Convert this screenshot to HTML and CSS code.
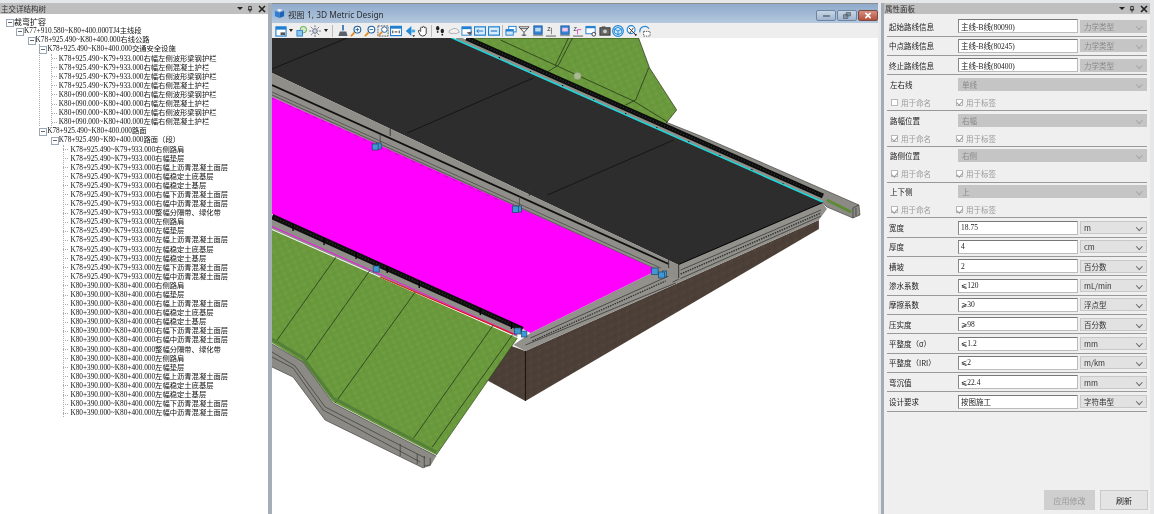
FILE: index.html
```html
<!DOCTYPE html>
<html lang="zh">
<head>
<meta charset="utf-8">
<title>3D Metric Design</title>
<link rel="stylesheet" href="styles.css">
</head>
<body>
<div class="app">
  <aside class="panel tree-panel">
    <header class="panel-title"><span>主交详结构树</span>
      <span class="panel-tools"><i class="tri"></i><svg viewBox="0 0 7 8" class="pin"><path d="M2 1h3v4H2zM1 5h5M3.5 5v3" fill="none" stroke="#222"/></svg><svg viewBox="0 0 8 8" class="cross"><path d="M1 1l6 6M7 1L1 7" stroke="#222" stroke-width="1.6"/></svg></span>
    </header>
    <div class="tree">
      <div class="node top">裁弯扩容</div>
      <ul>
        <li><div class="node">K77+910.580~K80+400.000TJ4主线段</div>
          <ul>
            <li><div class="node">K78+925.490~K80+400.000右线公路</div>
              <ul>
                <li class="bar"><div class="node">K78+925.490~K80+400.000交通安全设施</div>
                  <ul class="lined">
                    <li class="leaf">K78+925.490~K79+933.000右幅左侧波形梁钢护栏</li>
                    <li class="leaf">K78+925.490~K79+933.000右幅左侧混凝土护栏</li>
                    <li class="leaf">K78+925.490~K79+933.000左幅右侧波形梁钢护栏</li>
                    <li class="leaf">K78+925.490~K79+933.000左幅右侧混凝土护栏</li>
                    <li class="leaf">K80+090.000~K80+400.000右幅左侧波形梁钢护栏</li>
                    <li class="leaf">K80+090.000~K80+400.000右幅左侧混凝土护栏</li>
                    <li class="leaf">K80+090.000~K80+400.000左幅右侧波形梁钢护栏</li>
                    <li class="leaf">K80+090.000~K80+400.000左幅右侧混凝土护栏</li>
                  </ul>
                </li>
                <li><div class="node">K78+925.490~K80+400.000路面</div>
                  <ul>
                    <li><div class="node">K78+925.490~K80+400.000路面（段）</div>
                      <ul class="lined">
                        <li class="leaf">K78+925.490~K79+933.000右侧路肩</li>
                        <li class="leaf">K78+925.490~K79+933.000右幅垫层</li>
                        <li class="leaf">K78+925.490~K79+933.000右幅上沥青混凝土面层</li>
                        <li class="leaf">K78+925.490~K79+933.000右幅稳定土底基层</li>
                        <li class="leaf">K78+925.490~K79+933.000右幅稳定土基层</li>
                        <li class="leaf">K78+925.490~K79+933.000右幅下沥青混凝土面层</li>
                        <li class="leaf">K78+925.490~K79+933.000右幅中沥青混凝土面层</li>
                        <li class="leaf">K78+925.490~K79+933.000整幅分隔带、绿化带</li>
                        <li class="leaf">K78+925.490~K79+933.000左侧路肩</li>
                        <li class="leaf">K78+925.490~K79+933.000左幅垫层</li>
                        <li class="leaf">K78+925.490~K79+933.000左幅上沥青混凝土面层</li>
                        <li class="leaf">K78+925.490~K79+933.000左幅稳定土底基层</li>
                        <li class="leaf">K78+925.490~K79+933.000左幅稳定土基层</li>
                        <li class="leaf">K78+925.490~K79+933.000左幅下沥青混凝土面层</li>
                        <li class="leaf">K78+925.490~K79+933.000左幅中沥青混凝土面层</li>
                        <li class="leaf">K80+390.000~K80+400.000右侧路肩</li>
                        <li class="leaf">K80+390.000~K80+400.000右幅垫层</li>
                        <li class="leaf">K80+390.000~K80+400.000右幅上沥青混凝土面层</li>
                        <li class="leaf">K80+390.000~K80+400.000右幅稳定土底基层</li>
                        <li class="leaf">K80+390.000~K80+400.000右幅稳定土基层</li>
                        <li class="leaf">K80+390.000~K80+400.000右幅下沥青混凝土面层</li>
                        <li class="leaf">K80+390.000~K80+400.000右幅中沥青混凝土面层</li>
                        <li class="leaf">K80+390.000~K80+400.000整幅分隔带、绿化带</li>
                        <li class="leaf">K80+390.000~K80+400.000左侧路肩</li>
                        <li class="leaf">K80+390.000~K80+400.000左幅垫层</li>
                        <li class="leaf">K80+390.000~K80+400.000左幅上沥青混凝土面层</li>
                        <li class="leaf">K80+390.000~K80+400.000左幅稳定土底基层</li>
                        <li class="leaf">K80+390.000~K80+400.000左幅稳定土基层</li>
                        <li class="leaf">K80+390.000~K80+400.000左幅下沥青混凝土面层</li>
                        <li class="leaf">K80+390.000~K80+400.000左幅中沥青混凝土面层</li>
                      </ul>
                    </li>
                  </ul>
                </li>
              </ul>
            </li>
          </ul>
        </li>
      </ul>
    </div>
  </aside>

  <div class="split-left"></div>

  <main class="view">
    <header class="view-title">
      <svg class="view-logo" viewBox="0 0 12 12"><path d="M1 3l5 2v6L1 9z" fill="#2f7fd6"/><path d="M6 5l5-2v6l-5 2z" fill="#1f62b4"/><path d="M3 2l3-1 3 1-3 2z" fill="#e8f1fb"/></svg>
      <span class="view-name">视图 1, 3D Metric Design</span>
      <span class="win-btns">
        <span class="win-btn"><i class="w-min"></i></span>
        <span class="win-btn"><svg viewBox="0 0 9 8"><path d="M3.5 .5h5v4h-5zM.5 3h5v4.500h-5z" fill="#8592a2" stroke="#4a5460" stroke-width=".7"/></svg></span>
        <span class="win-btn close"><svg viewBox="0 0 9 8"><path d="M1.500 1l6 6M7.500 1l-6 6" stroke="#fff" stroke-width="1.800"/></svg></span>
      </span>
    </header>
    <nav class="view-tools">
      <svg class="ic" viewBox="0 0 13 13"><rect x="1" y="2" width="11" height="10" fill="#fff" stroke="#1f7fd0" stroke-width="1.200"/><rect x="1" y="2" width="11" height="3" fill="#1f7fd0"/><rect x="6" y="8" width="5" height="3" fill="#555"/></svg>
      <i class="drop"></i>
      <svg class="ic" viewBox="0 0 13 13"><circle cx="8" cy="5" r="3.500" fill="#cfe8c4" stroke="#59a848"/><rect x="1" y="6" width="6" height="6" fill="#8ec5ee" stroke="#2f7fd0"/></svg>
      <svg class="ic" viewBox="0 0 13 13"><circle cx="6.500" cy="6.500" r="2.500" fill="#c5d4e6" stroke="#667"/><path d="M6.500 0v2.500M6.500 10.500V13M0 6.500h2.500M10.500 6.500H13M2 2l2 2M9 9l2 2M11 2L9 4M4 9l-2 2" stroke="#778" stroke-width="1"/></svg>
      <i class="drop"></i><i class="sep wide-sep"></i>
      <svg class="ic" viewBox="0 0 13 13"><path d="M5.500 0h2v6h-2z" fill="#3f78b8"/><path d="M3 7h7l1.500 5h-10z" fill="#59616c"/></svg>
      <svg class="ic" viewBox="0 0 13 13"><circle cx="8" cy="5" r="3.700" fill="#fff" stroke="#1d5f9c" stroke-width="1.200"/><path d="M6 5h4M8 3v4" stroke="#1d5f9c"/><path d="M5 8l-4 4" stroke="#e58a1f" stroke-width="2"/></svg>
      <svg class="ic" viewBox="0 0 13 13"><circle cx="8" cy="5" r="3.700" fill="#fff" stroke="#1d5f9c" stroke-width="1.200"/><path d="M6 5h4" stroke="#1d5f9c"/><path d="M5 8l-4 4" stroke="#e58a1f" stroke-width="2"/></svg>
      <svg class="ic" viewBox="0 0 13 13"><rect x="1" y="1" width="11" height="11" fill="none" stroke="#555" stroke-dasharray="2 1"/><circle cx="8" cy="5" r="3" fill="#fff" stroke="#1d5f9c"/><path d="M5.500 7.500L2 11" stroke="#e58a1f" stroke-width="1.800"/></svg>
      <svg class="ic" viewBox="0 0 13 13"><rect x=".5" y="1.500" width="12" height="10" fill="#fff" stroke="#1f7fd0" stroke-width="1.300"/><rect x="1" y="2" width="11" height="2" fill="#1f7fd0"/><path d="M3 6v3M10 6v3M5 7.500h3" stroke="#222"/></svg>
      <svg class="ic" viewBox="0 0 13 13"><path d="M8 1L2 6.500 8 12z" fill="#1f8ad6"/><path d="M8 5h4v3H8z" fill="#4aa7e6"/><path d="M9 11h3l-1.500 2z" fill="#222"/></svg>
      <svg class="ic" viewBox="0 0 13 13"><path d="M4 6V3q1-2 2 0V2q1-1 2 0v1q1-1 2 0v6q-1 3-4 3T2 8L1.500 6q1-1 2.500 1z" fill="#fff" stroke="#333"/></svg>
      <i class="sep"></i>
      <svg class="ic" viewBox="0 0 13 13"><ellipse cx="4" cy="3.500" rx="1.800" ry="2.500" fill="#222"/><ellipse cx="9" cy="6.500" rx="1.800" ry="2.500" fill="#222"/><circle cx="4" cy="7.500" r="1" fill="#222"/><circle cx="9" cy="10.500" r="1" fill="#222"/></svg>
      <svg class="ic" viewBox="0 0 13 13"><path d="M1 8q0-3 3-3 2-2 5-1 3 1 3 4-3 2-6 1-3 1-5-1z" fill="#f2f2f2" stroke="#aaa"/></svg>
      <svg class="ic" viewBox="0 0 13 13"><rect x="1" y="2" width="10" height="9" fill="#fff" stroke="#1f7fd0"/><rect x="1" y="2" width="10" height="2.500" fill="#1f7fd0"/><path d="M6 8l6-1-2 4z" fill="#555"/></svg>
      <svg class="ic" viewBox="0 0 13 13"><rect x=".5" y="2" width="12" height="9" fill="#d8ecfb" stroke="#1f7fd0" stroke-width="1.300"/><path d="M3 6.500h7M3 6.500l2-2M3 6.500l2 2" stroke="#1f6fc0" fill="none"/></svg>
      <svg class="ic" viewBox="0 0 13 13"><rect x=".5" y="2" width="12" height="9" fill="#d8ecfb" stroke="#1f7fd0" stroke-width="1.300"/><path d="M3 6.500h7" stroke="#1f6fc0" stroke-width="1.200"/></svg>
      <i class="sep"></i>
      <svg class="ic" viewBox="0 0 13 13"><rect x="4" y="1.500" width="8" height="6" fill="#fff" stroke="#1f7fd0"/><rect x="1" y="5" width="8" height="6" fill="#cfe6f8" stroke="#1f7fd0"/><rect x="1" y="5" width="8" height="2" fill="#1f7fd0"/></svg>
      <svg class="ic" viewBox="0 0 13 13"><path d="M1 2h11L6.500 8z" fill="#fff" stroke="#444"/><path d="M6.500 8v4M4 11h5M3 4h7" stroke="#444"/></svg>
      <svg class="ic" viewBox="0 0 13 13"><rect x="2" y="1" width="9" height="9" fill="#3a83d2" stroke="#1d5fa8"/><rect x="3.500" y="3" width="6" height="4" fill="#bcd9f3"/><path d="M1 11.500h11" stroke="#888"/></svg>
      <svg class="ic" viewBox="0 0 13 13"><path d="M1 12h11" stroke="#888" stroke-width="1.500"/><path d="M7 10V3" stroke="#777"/><text x="2.500" y="7" class="ic-txt">Z</text></svg>
      <svg class="ic" viewBox="0 0 13 13"><rect x="2" y="1" width="9" height="9" fill="#3a83d2" stroke="#1d5fa8"/><rect x="3.500" y="3" width="6" height="4" fill="#f3c7ea"/><path d="M1 11.500h11" stroke="#888"/></svg>
      <svg class="ic" viewBox="0 0 13 13"><path d="M1 12h11" stroke="#888" stroke-width="1.500"/><path d="M6 10V5H10" stroke="#d84fc8" fill="none"/><text x="1.500" y="6" class="ic-txt">Z</text></svg>
      <svg class="ic" viewBox="0 0 13 13"><rect x="1" y="1.500" width="10" height="8" fill="#fff" stroke="#1f7fd0"/><rect x="1" y="1.500" width="10" height="2" fill="#1f7fd0"/><circle cx="9.500" cy="10" r="2" fill="#fff" stroke="#333"/></svg>
      <svg class="ic" viewBox="0 0 13 13"><rect x="1" y="3" width="11" height="8" fill="#666" stroke="#333"/><circle cx="6.500" cy="7" r="2" fill="#ccc"/><rect x="3" y="1.500" width="4" height="2" fill="#555"/></svg>
      <svg class="ic" viewBox="0 0 13 13"><circle cx="6.500" cy="6.500" r="5.800" fill="#cfe7f9" stroke="#1f86d6" stroke-width="1.200"/><path d="M2.500 4.500l4-2 4 2-4 2zM2.500 4.500v4l4 2v-4M10.500 4.500v4l-4 2" fill="none" stroke="#1f86d6"/></svg>
      <svg class="ic" viewBox="0 0 13 13"><circle cx="5.500" cy="5" r="4.300" fill="#fff" stroke="#1f86d6" stroke-width="1.200"/><path d="M3 3l8 8M8 3l-4 6" stroke="#333"/><path d="M9 10l3 0-1.500 2z" fill="#111"/></svg>
      <svg class="ic" viewBox="0 0 13 13"><path d="M1 8a5.500 5.500 0 0 1 10-4" fill="none" stroke="#1f86d6" stroke-width="1.200"/><path d="M5 7h7v5H5z" fill="#fff" stroke="#555" stroke-dasharray="1.500 1"/></svg>
    </nav>
    <div class="canvas">
      <svg class="scene" viewBox="272 38 605 476" preserveAspectRatio="none" aria-hidden="true">
        <defs>
          <pattern id="grass" width="7" height="6" patternUnits="userSpaceOnUse" patternTransform="rotate(-25)">
            <rect width="7" height="6" fill="#6a993d"/><circle cx="2" cy="2" r="1.600" fill="#6e9e40"/><circle cx="5.500" cy="4.500" r="1.400" fill="#66953a"/>
          </pattern>
          <pattern id="brick" width="8" height="8" patternUnits="userSpaceOnUse" patternTransform="skewY(-25)">
            <rect width="8" height="8" fill="#4c3f37"/><rect x="1" y="1" width="3" height="3" fill="#50433a"/><rect x="5" y="5" width="2.500" height="2.500" fill="#483c34"/>
          </pattern>
        </defs>
        <!-- far ditch -->
        <polygon points="660,120 700,136 753,159 858,205 859,215 852,218 826,207 815,195 660,128" fill="#8b8a84" stroke="#333" stroke-width=".6"/>
        <path d="M826,200L850,212" stroke="#5f8a35" stroke-width="3"/>
        <path d="M852,218V208L858,205M855,216V208" stroke="#333" stroke-width=".7" fill="none"/>
        <!-- far slope -->
        <polygon points="470,38 638,38 649,68 676,110 664,125" fill="url(#grass)" stroke="#26331a" stroke-width=".7"/>
        <path d="M500,40L633,101L667,122M572,38L558,65L542,75M568,38L555,65M648,68L635,100L625,105" fill="none" stroke="#1c2a14" stroke-width=".7"/>
        <circle cx="577" cy="76" r="3.600" fill="#a9ba92" stroke="#8a9c78" stroke-width=".6"/>
        <!-- far fence -->
        <path d="M456,38L822,201" stroke="#8f8f8a" stroke-width="5"/>
        <path d="M466,38L822,196" stroke="#0d0d0d" stroke-width="5"/>
        <path d="M466,38L822,196" stroke="#333" stroke-width="1.500" stroke-dasharray="1 2"/>
        <path d="M499,57V65M530,71V79M562,85V93M593,99V107M625,113V121M656,127V135M688,141V149M719,155V163M751,169V177M782,183V191" stroke="#000" stroke-width="1.300"/>
        <path d="M460,43L822,204" stroke="#e01010" stroke-width="1.200" stroke-dasharray="8 26"/>
        <path d="M450,37.500L822,202.500" stroke="#18d9dc" stroke-width="2"/>
        <!-- asphalt -->
        <polygon points="272,38 450,38 822,203 678,265 272,73" fill="#2d2d2d"/>
        <path d="M347,38L272,69M407,133L533,78M547,195L673,140" stroke="#0b0b0b" stroke-width=".7"/>
        <path d="M678,265L822,203" stroke="#000" stroke-width="1.800"/>
        <!-- wall -->
        <polygon points="480,335 525,351 818,220 818,229 525,401 488,381" fill="url(#brick)"/>
        <path d="M525,351V401" stroke="#17110e" stroke-width="1"/>
        <!-- outer slab -->
        <polygon points="678,265 822,203 826,209 818,220 525,351 513,345 530,333 657,270" fill="#92918b"/>
        <path d="M680,270L820,210M672,282L820,216M530,338L668,276M525,345L675,283" stroke="#2c2c2c" stroke-width=".7"/>
        <path d="M680,274L820,213" stroke="#333" stroke-width="1.500" stroke-dasharray="1.500 1"/>
        <path d="M532,341L665,281" stroke="#333" stroke-width="1.300" stroke-dasharray="1.500 1"/>
        <!-- median -->
        <polygon points="272,73 678,265 680,280 657,272 272,97" fill="#8f8e88"/>
        <path d="M272,85L668,264" stroke="#111" stroke-width="1.800"/>
        <path d="M272,92L660,268M272,95L657,270" stroke="#333" stroke-width=".6"/>
        <path d="M390,128V136M529,188V196M668,252V268M678,265V278" stroke="#333" stroke-width=".9"/>
        <path d="M380,135V147M519,197V208" stroke="#555" stroke-width="1"/>
        <!-- carriageway -->
        <polygon points="272,97 657,270 530,333 515,325 272,214" fill="#ff00ff"/>
        <path d="M272,98L500,201" stroke="#7a1a7a" stroke-width=".5" stroke-dasharray="4 5"/>
        <!-- near fence -->
        <polygon points="272,218 517,330 517,337 272,229" fill="#8f8e88"/>
        <path d="M272,216.500L522,329.500" stroke="#0d0d0d" stroke-width="5.500"/>
        <path d="M272,216.500L522,329.500" stroke="#333" stroke-width="1.500" stroke-dasharray="1 2"/>
        <path d="M293,224V231M324,238V245M356,252V259M387,266V273M419,281V288M480,308V315M511,322V329" stroke="#000" stroke-width="1.300"/>
        <path d="M272,226.500L516,335" stroke="#f414e8" stroke-width="1"/>
        <path d="M380,277L513,334" stroke="#e81010" stroke-width="1"/>
        <!-- near slope -->
        <polygon points="272,230 517,338 436,455 333,402 303,362 272,343" fill="url(#grass)"/>
        <path d="M336,257L275,343M370,270L305,362M415,292L335,403M493,325L412,440M512,335L432,447" stroke="#1c2a14" stroke-width=".7" fill="none"/>
        <path d="M517,338L436,455" stroke="#2e4a1c" stroke-width=".7"/>
        <path d="M272,339L303,358L333,398L436,452" stroke="#55803a" stroke-width="3" fill="none"/>
        <!-- near ditch -->
        <polygon points="272,344 303,362 333,403 436,456 430,466 423,468 325,420 293,377 272,367" fill="#8b8a84"/>
        <path d="M272,344L303,362L333,403L436,456M272,352L295,366L325,407L425,458M272,357L293,368L323,410L420,462M272,367L293,377L325,420L423,468" stroke="#2b2b2b" stroke-width=".6" fill="none"/>
        <path d="M400,444V456M417,454V464M424,456V468M430,458V465L424,466" stroke="#2b2b2b" stroke-width=".6" fill="none"/>
        <!-- handles -->
        <g fill="#3f97d4" stroke="#1f4766" stroke-width=".7">
          <rect x="376" y="143" width="5" height="6"/><rect x="372" y="144" width="6" height="6"/>
          <rect x="516" y="206" width="5" height="6"/><rect x="512" y="206" width="6" height="6.500"/>
          <rect x="373" y="266" width="6" height="6"/>
          <rect x="514" y="328" width="6.500" height="6"/><rect x="521" y="331" width="5.500" height="6"/>
          <rect x="651" y="268" width="6.500" height="6.500"/><rect x="662" y="271" width="4" height="6"/><rect x="658" y="272" width="6" height="6"/>
        </g>
      </svg>
    </div>
  </main>

  <div class="split-right"></div>

  <aside class="panel props">
    <header class="panel-title"><span>属性面板</span>
      <span class="panel-tools"><i class="tri"></i><svg viewBox="0 0 7 8" class="pin"><path d="M2 1h3v4H2zM1 5h5M3.500 5v3" fill="none" stroke="#222"/></svg><svg viewBox="0 0 8 8" class="cross"><path d="M1 1l6 6M7 1L1 7" stroke="#222" stroke-width="1.600"/></svg></span>
    </header>
    <div class="form">
      <div class="row"><label>起始路线信息</label><div class="input cjk">主线-B线(80090)</div><div class="sel off">力学类型</div></div>
      <div class="row"><label>中点路线信息</label><div class="input cjk">主线-B线(80245)</div><div class="sel off">力学类型</div></div>
      <div class="row"><label>终止路线信息</label><div class="input cjk">主线-B线(80400)</div><div class="sel off">力学类型</div></div>

      <div class="group">
        <div class="g-top"><label>左右线</label><div class="sel off wide">单线</div></div>
        <div class="g-checks"><span class="chk"><i class="box"></i>用于命名</span><span class="chk"><i class="box on"></i>用于标签</span></div>
      </div>
      <div class="group">
        <div class="g-top"><label>路幅位置</label><div class="sel off wide">右幅</div></div>
        <div class="g-checks"><span class="chk"><i class="box on"></i>用于命名</span><span class="chk"><i class="box on"></i>用于标签</span></div>
      </div>
      <div class="group">
        <div class="g-top"><label>路侧位置</label><div class="sel off wide">右侧</div></div>
        <div class="g-checks"><span class="chk"><i class="box on"></i>用于命名</span><span class="chk"><i class="box on"></i>用于标签</span></div>
      </div>
      <div class="group">
        <div class="g-top"><label>上下侧</label><div class="sel off wide">上</div></div>
        <div class="g-checks"><span class="chk"><i class="box on"></i>用于命名</span><span class="chk"><i class="box on"></i>用于标签</span></div>
      </div>

      <div class="row"><label>宽度</label><div class="input">18.75</div><div class="sel">m</div></div>
      <div class="row"><label>厚度</label><div class="input">4</div><div class="sel">cm</div></div>
      <div class="row"><label>横坡</label><div class="input">2</div><div class="sel">百分数</div></div>
      <div class="row"><label>渗水系数</label><div class="input">⩽120</div><div class="sel">mL/min</div></div>
      <div class="row"><label>摩擦系数</label><div class="input">⩾30</div><div class="sel">浮点型</div></div>
      <div class="row"><label>压实度</label><div class="input">⩾98</div><div class="sel">百分数</div></div>
      <div class="row"><label>平整度（σ）</label><div class="input">⩽1.2</div><div class="sel">mm</div></div>
      <div class="row"><label>平整度（IRI）</label><div class="input">⩽2</div><div class="sel">m/km</div></div>
      <div class="row"><label>弯沉值</label><div class="input">⩽22.4</div><div class="sel">mm</div></div>
      <div class="row"><label>设计要求</label><div class="input cjk">按图施工</div><div class="sel">字符串型</div></div>
    </div>
    <footer class="actions">
      <button class="btn off" type="button">应用修改</button>
      <button class="btn" type="button">刷新</button>
    </footer>
  </aside>
</div>
</body>
</html>
```

FILE: styles.css
```css
* { box-sizing: border-box; }
html, body { margin: 0; padding: 0; height: 100%; background: #fff; overflow: hidden; }
body { font-family: "Liberation Serif", "Noto Sans CJK SC", serif; font-size: 7.3px; color: #111; }

.app {
  display: flex;
  width: 1154px;
  height: 514px;
  padding-top: 3px;
  background: #e6e7e8;
  filter: blur(.35px);
}

/* panels */
.panel { display: flex; flex-direction: column; height: 511px; }
.tree-panel { width: 268px; background: #fff; }
.panel-title {
  display: flex;
  align-items: center;
  justify-content: space-between;
  height: 11px;
  flex: none;
  padding: 0 2px 0 1px;
  background: #bfbfbf;
  font-family: "Noto Sans CJK SC", sans-serif;
  font-size: 7.5px;
  line-height: 11px;
  color: #333;
}
.panel-tools { display: flex; align-items: center; gap: 3px; }
.tri { display: block; width: 0; height: 0; border: 3px solid transparent; border-top: 3px solid #222; border-bottom: 0; margin-right: 1px; }
.pin { width: 6px; height: 8px; }
.cross { width: 8px; height: 8px; margin-left: 2px; }

/* tree */
.tree { flex: 1; padding-top: 3.200px; line-height: 9.100px; white-space: nowrap; }
.tree ul { list-style: none; margin: 0 0 0 4px; padding: 0 0 0 6.600px; border-left: 1px dotted transparent; }
.tree ul.lined { border-left-color: #aaa; }
.tree > ul { margin-left: 7px; padding-left: 16px; }
.tree > .node { margin-left: 14px; font-family: "Noto Sans CJK SC", sans-serif; font-size: 8px; }
.tree li { position: relative; min-height: 9.100px; }
.tree li.bar::after {
  content: "";
  position: absolute;
  left: -8px;
  top: 0;
  bottom: 0;
  border-left: 1px dotted #aaa;
}
.node { position: relative; height: 9.100px; }
.node::before {
  content: "";
  position: absolute;
  left: -8px;
  top: 1.500px;
  width: 6px;
  height: 6px;
  z-index: 1;
  border: 1px solid #9aa7b4;
  background: linear-gradient(#666, #666) center / 4px 1px no-repeat #fff;
}
.leaf { height: 9.100px; }
.leaf::before {
  content: "";
  position: absolute;
  left: -7px;
  top: 4.500px;
  width: 5px;
  border-top: 1px dotted #aaa;
}

/* splitters */
.split-left { width: 4px; height: 511px; background: #a5aeb7; }
.split-right { width: 6px; height: 511px; background: linear-gradient(90deg, #e8e9ea 0 3px, #a3acb5 3px); }

/* view */
.view { width: 606px; height: 511px; display: flex; flex-direction: column; border-top: 1px solid #8d8d8d; }
.view-title {
  display: flex;
  align-items: center;
  height: 19px;
  flex: none;
  padding: 0 0 0 2px;
  background: linear-gradient(#8eaacb, #b4c8de);
}
.view-logo { width: 11px; height: 11px; margin-right: 3px; }
.view-name { font-family: "Noto Sans", "Noto Sans CJK SC", sans-serif; font-size: 8.400px; color: #2c2f33; }
.win-btns { margin-left: auto; display: flex; gap: 1px; padding-top: 4px; }
.win-btn {
  display: flex; align-items: center; justify-content: center;
  width: 20px; height: 11px;
  border: 1px solid #6f84a0; border-radius: 2px;
  background: linear-gradient(#c7d6e6, #a0b7d0);
}
.win-btn svg { width: 8px; height: 7px; }
.w-min { display: block; width: 7px; height: 2px; background: #75808d; }
.win-btn.close { background: linear-gradient(#d58f80, #b5503e); border-color: #7c4a40; }

.view-tools {
  display: flex;
  align-items: center;
  height: 15px;
  flex: none;
  padding-left: 3px;
  gap: 1.450px;
  background: #eeeeee;
}
.ic { width: 12px; height: 12px; flex: none; }
.ic-txt { font-size: 6px; font-family: "Liberation Sans", sans-serif; fill: #333; }
.drop { display: block; width: 0; height: 0; margin: 0 1px; border: 2.500px solid transparent; border-top: 3px solid #222; border-bottom: 0; }
.sep { display: block; width: 1px; height: 12px; margin: 0 .5px; background: #bbb; }
.wide-sep { margin: 0 2px; }

.canvas { flex: 1; background: #fff; min-height: 0; }
.scene { display: block; width: 100%; height: 100%; }

/* properties */
.props { width: 266px; background: #efefef; }
.form { padding: 3.300px 3px 0 5px; font-family: "Noto Sans CJK SC", sans-serif; font-size: 7.500px; }
.form label { width: 69px; flex: none; color: #222; }
.row { display: flex; align-items: center; height: 19.350px; border-bottom: 1px solid #999; margin-left: -2px; padding-left: 2px; }
.input {
  display: flex; align-items: center;
  width: 120px; height: 14px; flex: none;
  margin-right: 2px;
  padding-left: 2px;
  background: #fff;
  border: 1px solid #bbb;
  border-top: 1px solid #777;
  border-left: 1px solid #888;
  font-family: "Liberation Serif", "DejaVu Sans", serif;
  color: #222;
}
.input.cjk { font-family: "Liberation Serif", "Noto Sans CJK SC", serif; font-size: 7.500px; }
.sel {
  position: relative;
  display: flex; align-items: center;
  flex: 1; height: 13px;
  padding-left: 3px;
  background: #e2e2e2;
  border: 1px solid #c8c8c8;
  color: #333;
}
.sel::after {
  content: "";
  position: absolute;
  right: 5px; top: 3px;
  width: 3.500px; height: 3.500px;
  border-right: 1px solid #666;
  border-bottom: 1px solid #666;
  transform: rotate(45deg);
}
.sel.off { background: #c5c5c5; border-color: #c5c5c5; color: #8a8a8a; }
.sel.off::after { border-color: #a5a5a5; }
.wide { flex: 1; }

.group { height: 35.750px; border-bottom: 1px solid #999; margin-left: -2px; padding: 2.500px 0 0 3px; display: flex; flex-direction: column; }
.g-top { display: flex; align-items: center; }
.g-top label { width: 68px; }
.g-checks { display: flex; margin-top: 5.500px; color: #9a9a9a; height: 12px; align-items: center; padding-left: 1px; }
.chk { display: flex; align-items: center; width: 65px; gap: 3px; }
.box { display: block; position: relative; width: 7px; height: 7px; background: #fff; border: 1px solid #b9b9b9; }
.box.on::after {
  content: "";
  position: absolute;
  left: 1.200px; top: -.500px;
  width: 2.500px; height: 4.500px;
  border-right: 1px solid #9a9a9a;
  border-bottom: 1px solid #9a9a9a;
  transform: rotate(40deg);
}

.actions { margin-top: auto; display: flex; justify-content: flex-end; gap: 5px; padding: 0 2px 4px 0; }
.btn {
  width: 51px; height: 20px;
  padding: 0;
  background: #e4e4e4;
  border: 1px solid #c9c9c9;
  font-family: "Noto Sans CJK SC", sans-serif;
  font-size: 8px;
  color: #222;
}
.btn:last-child { width: 48px; }
.btn.off { background: #cfcfcf; border-color: #cfcfcf; color: #9a9a9a; }
```
